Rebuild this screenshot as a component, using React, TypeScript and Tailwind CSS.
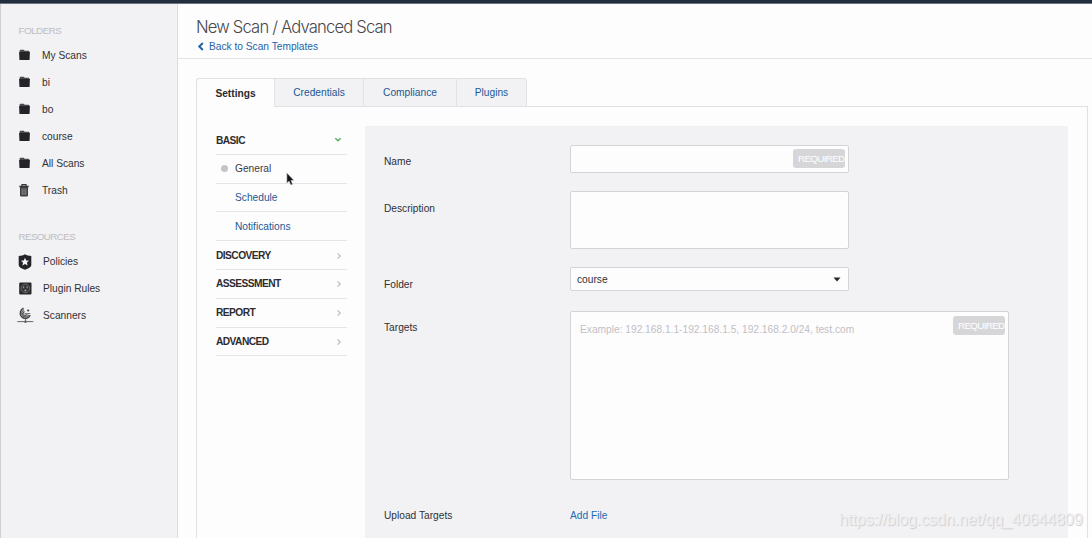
import type { ReactNode } from "react";

function FolderIcon() {
  return (
    <svg width="11" height="12" viewBox="0 0 11 12" className="block">
      <path d="M.6 1.700C.6 1.100.9.8 1.400.8h3.200c.5 0 .7.300.9 1h4.100c.5 0 .8.300.8.800v1H.6z" fill="#4a4a4e" />
      <path d="M.1 3h10.800l-.3 7.400c0 .4-.3.600-.7.600H1.100c-.4 0-.7-.2-.7-.6z" fill="#242428" />
    </svg>
  );
}

function TrashIcon() {
  return (
    <svg width="10" height="13" viewBox="0 0 10 13" className="block">
      <path d="M3 1.800V.7h4v1.100M.3 2.500h9.400" stroke="#38383c" strokeWidth="1.300" fill="none" />
      <path d="M1 3h8v8.600c0 .5-.3.800-.8.800H1.800c-.5 0-.8-.3-.8-.8z" fill="#3c3c42" />
      <path d="M3.100 4.300v6.800M5 4.300v6.800M6.900 4.300v6.800" stroke="#a9a4a4" strokeWidth=".8" />
    </svg>
  );
}

function ShieldIcon() {
  return (
    <svg width="14" height="16" viewBox="0 0 14 16" className="block">
      <path d="M7 .2C8.600 1.300 10.800 1.900 13.300 1.900V11c0 2.200-2.900 3.400-6.300 4.800C3.600 14.400.7 13.200.7 11V1.900C3.200 1.900 5.400 1.300 7 .2z" fill="#242428" />
      <path d="M7 3.700l1.200 2.700 2.900.3-2.200 1.900.7 2.900L7 10l-2.600 1.500.7-2.900-2.200-1.900 2.900-.3z" fill="#f4f4f6" />
    </svg>
  );
}

function PluginIcon() {
  return (
    <svg width="13" height="13" viewBox="0 0 13 13" className="block">
      <rect x=".2" y=".4" width="12.300" height="12.100" rx="1" fill="#29292c" />
      <circle cx="6.400" cy="6.400" r="4.300" fill="#333337" stroke="#77777b" strokeWidth=".8" />
      <path d="M4.700 4.300v2M8.100 4.300v2" stroke="#a4a4a8" strokeWidth="1" />
      <path d="M5.500 9.200V8.400a.9.900 0 0 1 1.800 0v.8z" fill="#aaaaae" />
    </svg>
  );
}

function ScannerIcon() {
  return (
    <svg width="17" height="17" viewBox="0 0 17 17" className="block" fill="none">
      <path d="M6.500 1.200A5.300 5.300 0 1 0 13.300 8.300L8.200 6.600z" fill="#b4b4b8" />
      <path d="M6.500 1.200A5.300 5.300 0 1 0 13.300 8.300" stroke="#3f3f43" strokeWidth="1.300" />
      <path d="M6.900 2.900A3.700 3.700 0 1 0 11.700 8" stroke="#55555a" strokeWidth="1" />
      <path d="M7.400 4.600A2.100 2.100 0 1 0 9.900 7.400" stroke="#3f3f43" strokeWidth="1" />
      <path d="M8.200 6.600h5.100" stroke="#4a4a4e" strokeWidth=".8" />
      <circle cx="11.200" cy="3.500" r="1.100" fill="#3a3a3e" />
      <path d="M8.500 11.800v3M.3 14.600h16" stroke="#66666a" strokeWidth="1" />
      <circle cx="8.500" cy="14.700" r="1.300" fill="#66666a" />
    </svg>
  );
}

function SideRow({ icon, children, gap }: { icon: ReactNode; children: ReactNode; gap?: boolean }) {
  return (
    <li className="flex h-[27.1px] items-center">
      <span className={gap ? "flex w-[26px] justify-center" : "flex w-[24px] justify-center"}>{icon}</span>
      <span className={gap ? "pl-[5px] pt-[1px]" : "pl-[6px] pt-[1px]"}>{children}</span>
    </li>
  );
}

function Chevron({ open }: { open?: boolean }) {
  return open ? (
    <svg width="8" height="6" viewBox="0 0 8 6" fill="none" stroke="#58ad62" strokeWidth="1.400">
      <path d="M1.300 1.300L4 3.700l2.700-2.400" />
    </svg>
  ) : (
    <svg width="6" height="8" viewBox="0 0 6 8" fill="none" stroke="#b9b9bd" strokeWidth="1.100">
      <path d="M1.500 1.400L4.300 4 1.500 6.600" />
    </svg>
  );
}

function Section({ label, open }: { label: string; open?: boolean }) {
  return (
    <div className="flex h-[28.8px] items-center justify-between border-b border-[#e4e5ea] pr-[5px] pt-[1px] font-bold tracking-[-0.55px] text-[#2c2c30]">
      <span className={open ? "pt-[1px]" : ""}>{label}</span>
      <Chevron open={open} />
    </div>
  );
}

function SubItem({ label, active }: { label: string; active?: boolean }) {
  return (
    <div className="flex h-[28.8px] items-center border-b border-[#e4e5ea] pl-[5px] pt-[1px]">
      <span className={active ? "-mt-[2px] mr-[7px] size-[7px] rounded-full bg-[#c4c4c6]" : "mr-[7px] size-[7px]"} />
      <span className={active ? "text-[#3b3b3f]" : "text-[#1c5892]"}>{label}</span>
    </div>
  );
}

function Required() {
  return (
    <span className="flex h-[19px] w-[52px] items-center rounded-[3px] bg-[#d6d6d8] pl-[5px] text-[9.8px] tracking-[-0.65px] text-white">
      REQUIRED
    </span>
  );
}

function Field({ label, height, labelTop, children }: { label: string; height: string; labelTop: string; children: ReactNode }) {
  return (
    <div className={`flex items-start ${height}`}>
      <div className={`w-[186px] shrink-0 ${labelTop}`}>{label}</div>
      {children}
    </div>
  );
}

export default function App() {
  return (
    <div className="relative flex h-[538px] w-[1092px] flex-col overflow-hidden bg-[#fefdfe] font-['Liberation_Sans',Arial,sans-serif] text-[10.2px] leading-[14px] text-[#303034]">
      <div className="h-[4px] shrink-0 border-b border-[#6c7680] bg-[#222e3d]" />
      <div className="flex min-h-0 grow">
        <aside className="w-[178px] shrink-0 border-x border-l-[#cfcfd2] border-r-[#dcdce0] bg-[#f2f2f4] pl-[11px] pt-[20px]">
          <h2 className="pl-[6.5px] text-[9.8px] tracking-[-0.5px] text-[#bdbdc0]">FOLDERS</h2>
          <ul className="mt-[3.500px]">
            <SideRow icon={<FolderIcon />}>My Scans</SideRow>
            <SideRow icon={<FolderIcon />}>bi</SideRow>
            <SideRow icon={<FolderIcon />}>bo</SideRow>
            <SideRow icon={<FolderIcon />}>course</SideRow>
            <SideRow icon={<FolderIcon />}>All Scans</SideRow>
            <SideRow icon={<TrashIcon />}>Trash</SideRow>
          </ul>
          <h2 className="mt-[26px] pl-[6.5px] text-[9.8px] tracking-[-0.6px] text-[#bdbdc0]">RESOURCES</h2>
          <ul className="mt-[4px]">
            <SideRow gap icon={<ShieldIcon />}>Policies</SideRow>
            <SideRow gap icon={<PluginIcon />}>Plugin Rules</SideRow>
            <SideRow gap icon={<ScannerIcon />}>Scanners</SideRow>
          </ul>
        </aside>

        <main className="flex min-w-0 grow flex-col">
          <header className="h-[55px] shrink-0 border-b border-[#e3e3e8] pl-[18px] pt-[12px]">
            <h1 className="font-[Inter,'Liberation_Sans',sans-serif] text-[16.6px] font-light leading-[22px] tracking-[-0.82px] text-[#48484c]">
              New Scan / Advanced Scan
            </h1>
            <a className="flex items-center pt-[2px] text-[#1d64a6]">
              <svg width="8" height="9" viewBox="0 0 8 9" fill="none" stroke="#1d64a6" strokeWidth="2" className="-mt-[1px] mr-[5px]">
                <path d="M6.800 1L3.300 4.500 6.800 8" />
              </svg>
              Back to Scan Templates
            </a>
          </header>

          <div className="flex min-h-0 grow flex-col pl-[18px] pr-[4px] pt-[19px]">
            <div className="flex h-[29px] shrink-0 text-[#1c5892]">
              <div className="flex w-[78px] items-center justify-center rounded-tl-[3px] border-l border-t border-[#e1e1e5] pt-[1px] font-bold text-[#2a2a2e]">Settings</div>
              <div className="flex w-[89px] items-center justify-center border border-r-0 border-[#e1e1e5] bg-[#f2f2f4]">Credentials</div>
              <div className="flex w-[93px] items-center justify-center border border-r-0 border-[#e1e1e5] bg-[#f2f2f4]">Compliance</div>
              <div className="flex w-[71px] items-center justify-center rounded-tr-[3px] border border-[#e1e1e5] bg-[#f2f2f4]">Plugins</div>
              <div className="grow border-b border-[#e1e1e5]" />
            </div>
            <div className="flex min-h-0 grow border-x border-[#e1e1e5] pl-[19px] pr-[19px] pt-[19px]">
              <nav className="mr-[18px] w-[131px] shrink-0">
                <Section label="BASIC" open />
                <SubItem label="General" active />
                <SubItem label="Schedule" />
                <SubItem label="Notifications" />
                <Section label="DISCOVERY" />
                <Section label="ASSESSMENT" />
                <Section label="REPORT" />
                <Section label="ADVANCED" />
              </nav>
              <form className="grow bg-[#f2f2f4] pl-[19px] pt-[19px]">
                <Field label="Name" height="h-[46px]" labelTop="pt-[10px]">
                  <div className="flex h-[28px] w-[279px] items-start justify-end rounded-[2px] border border-[#d3d3d8] bg-[#fefdfe] pr-[3px] pt-[3px]">
                    <Required />
                  </div>
                </Field>
                <Field label="Description" height="h-[76px]" labelTop="pt-[11px]">
                  <div className="h-[58px] w-[279px] rounded-[2px] border border-[#d3d3d8] bg-[#fefdfe]" />
                </Field>
                <Field label="Folder" height="h-[44px]" labelTop="pt-[11px]">
                  <div className="flex h-[24px] w-[279px] items-center justify-between rounded-[2px] border border-[#d3d3d8] bg-[#fefdfe] pl-[6px] pr-[7px]">
                    <span className="pt-[1px]">course</span>
                    <svg width="8" height="5" viewBox="0 0 8 5">
                      <path d="M.5.5h7L4 4.500z" fill="#28282c" />
                    </svg>
                  </div>
                </Field>
                <Field label="Targets" height="h-[197px]" labelTop="pt-[10px]">
                  <div className="flex h-[169px] w-[439px] items-start justify-between rounded-[2px] border border-[#d3d3d8] bg-[#fefdfe] pl-[9px] pr-[3px] pt-[4px]">
                    <span className="pt-[7px] text-[#c0c0c4]">Example: 192.168.1.1-192.168.1.5, 192.168.2.0/24, test.com</span>
                    <Required />
                  </div>
                </Field>
                <Field label="Upload Targets" height="h-[20px]" labelTop="pt-[1px]">
                  <a className="pt-[1px] text-[#1d6bb3]">Add File</a>
                </Field>
              </form>
            </div>
          </div>
        </main>
      </div>

      <svg width="9" height="15" viewBox="0 0 9 15" className="absolute left-[286px] top-[172px]">
        <path d="M.8.800v10.400l2.300-2 1.700 3.900 1.900-.8-1.700-3.800h3z" fill="#151517" stroke="#dcdcde" strokeWidth=".6" />
      </svg>
      <div className="absolute left-[839px] top-[510px] text-[16px] leading-[20px] tracking-[-0.06px] text-[#f0f0f2] [text-shadow:1px_1px_1px_#cbcbcf]">
        https://blog.csdn.net/qq_40644809
      </div>
    </div>
  );
}
